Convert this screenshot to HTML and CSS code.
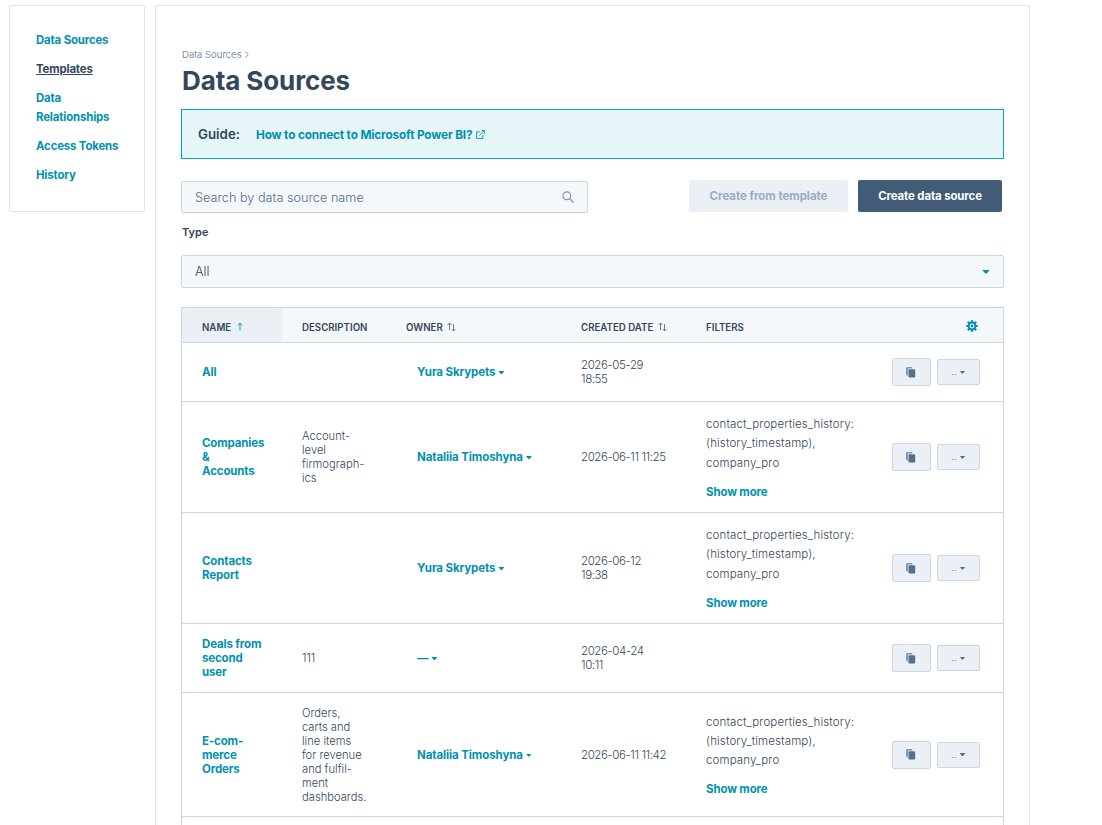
FILE: index.html
```
<!DOCTYPE html>
<html lang="en">
<head>
<meta charset="utf-8">
<title>Data Sources</title>
<link rel="stylesheet" href="styles.css">
</head>
<body>

<svg class="defs" width="0" height="0">
  <symbol id="copy" viewBox="0 0 10 11">
    <path fill="#7c98b6" d="M1.500 0h4.700v1.500H3.300c-.9 0-1.400.5-1.400 1.400v5.600H1.500C.7 8.500 0 7.900 0 7V1.500C0 .7.700 0 1.500 0z"/>
    <rect fill="#516f90" x="2.500" y="2.200" width="6.700" height="8.300" rx="1.200"/>
  </symbol>
  <symbol id="sort" viewBox="0 0 9 10">
    <path fill="none" stroke="#516f90" stroke-width=".9" d="M2.500 8V1M.5 3l2-2 2 2M6.500 2v7M4.800 7.200l1.800 1.800 1.800-1.800"/>
  </symbol>
</svg>

<div class="page">
  <nav class="sidebar">
    <a href="#">Data Sources</a>
    <a href="#" class="active">Templates</a>
    <a href="#">Data<br>Relationships</a>
    <a href="#">Access Tokens</a>
    <a href="#">History</a>
  </nav>

  <main class="content">
    <div class="breadcrumb">Data Sources
      <svg width="4" height="7" viewBox="0 0 4 7"><path fill="none" stroke="#7c98b6" d="M.5.5l2.600 3-2.600 3"/></svg>
    </div>
    <h1>Data Sources</h1>

    <div class="guide">
      <span class="guide-label">Guide:</span>
      <a href="#">How to connect to Microsoft Power BI?</a>
      <svg width="9" height="9" viewBox="0 0 9 9"><path fill="none" stroke="#0091ae" stroke-width=".9" d="M3.800 1.800H.6v6.600h6.300V5M3.300 5.600L8 .9M5.300.6h3.100v3.100"/></svg>
    </div>

    <div class="toolbar">
      <div class="search">
        <span>Search by data source name</span>
        <svg width="12" height="12" viewBox="0 0 12 12"><circle cx="4.800" cy="4.800" r="3.900" fill="none" stroke="#7c98b6" stroke-width="1.200"/><path stroke="#7c98b6" stroke-width="1.300" d="M7.600 7.600l3.900 3.900"/></svg>
      </div>
      <div class="toolbar-buttons">
        <button class="btn btn-disabled" disabled>Create from template</button>
        <button class="btn btn-primary">Create data source</button>
      </div>
    </div>

    <div class="label">Type</div>
    <div class="select"><span>All</span><i class="caret caret-lg"></i></div>

    <table>
      <colgroup>
        <col class="c-name"><col class="c-desc"><col class="c-owner"><col class="c-date"><col class="c-filters"><col>
      </colgroup>
      <thead>
        <tr>
          <th class="sorted">NAME <svg width="6" height="9" viewBox="0 0 6 9"><path fill="none" stroke="#00a4bd" d="M3 8.500V1M.7 3.300L3 1l2.300 2.300"/></svg></th>
          <th>DESCRIPTION</th>
          <th>OWNER <svg width="9" height="10"><use href="#sort"/></svg></th>
          <th>CREATED DATE <svg width="9" height="10"><use href="#sort"/></svg></th>
          <th>FILTERS</th>
          <th class="settings">
            <svg width="12" height="12" viewBox="0 0 12 12">
              <g stroke="#0091ae" fill="none">
                <circle cx="6" cy="6" r="3.400" stroke-width="2"/>
                <path stroke-width="2.200" d="M6 .3v1.900M6 9.800v1.900M.3 6h1.900M9.800 6h1.900M1.800 1.800l1.500 1.500M8.700 8.700l1.500 1.500M1.800 10.200l1.500-1.500M8.700 3.300l1.500-1.500"/>
              </g>
              <circle cx="6" cy="6" r="1.400" fill="#0091ae"/>
            </svg>
          </th>
        </tr>
      </thead>
      <tbody>
        <tr class="row-sm">
          <td><a href="#">All</a></td>
          <td></td>
          <td class="owner"><a href="#">Yura Skrypets</a><i class="caret"></i></td>
          <td class="date">2026-05-29<br>18:55</td>
          <td></td>
          <td class="actions"><div><button class="copy"><svg width="10" height="11"><use href="#copy"/></svg></button><button class="more">..<i class="caret"></i></button></div></td>
        </tr>
        <tr class="row-lg">
          <td><a href="#">Companies<br>&amp;<br>Accounts</a></td>
          <td class="desc">Account-<br>level<br>firmograph-<br>ics</td>
          <td class="owner"><a href="#">Nataliia Timoshyna</a><i class="caret"></i></td>
          <td class="date">2026-06-11 11:25</td>
          <td class="filters">contact_properties_history:<br>(history_timestamp),<br>company_pro<a href="#">Show more</a></td>
          <td class="actions"><div><button class="copy"><svg width="10" height="11"><use href="#copy"/></svg></button><button class="more">..<i class="caret"></i></button></div></td>
        </tr>
        <tr class="row-lg">
          <td><a href="#">Contacts<br>Report</a></td>
          <td></td>
          <td class="owner"><a href="#">Yura Skrypets</a><i class="caret"></i></td>
          <td class="date">2026-06-12<br>19:38</td>
          <td class="filters">contact_properties_history:<br>(history_timestamp),<br>company_pro<a href="#">Show more</a></td>
          <td class="actions"><div><button class="copy"><svg width="10" height="11"><use href="#copy"/></svg></button><button class="more">..<i class="caret"></i></button></div></td>
        </tr>
        <tr class="row-md">
          <td><a href="#">Deals from<br>second<br>user</a></td>
          <td class="desc">111</td>
          <td class="owner"><a href="#">—</a><i class="caret"></i></td>
          <td class="date">2026-04-24<br>10:11</td>
          <td></td>
          <td class="actions"><div><button class="copy"><svg width="10" height="11"><use href="#copy"/></svg></button><button class="more">..<i class="caret"></i></button></div></td>
        </tr>
        <tr class="row-xl">
          <td><a href="#">E-com-<br>merce<br>Orders</a></td>
          <td class="desc">Orders,<br>carts and<br>line items<br>for revenue<br>and fulfil-<br>ment<br>dashboards.</td>
          <td class="owner"><a href="#">Nataliia Timoshyna</a><i class="caret"></i></td>
          <td class="date">2026-06-11 11:42</td>
          <td class="filters">contact_properties_history:<br>(history_timestamp),<br>company_pro<a href="#">Show more</a></td>
          <td class="actions"><div><button class="copy"><svg width="10" height="11"><use href="#copy"/></svg></button><button class="more">..<i class="caret"></i></button></div></td>
        </tr>
      </tbody>
    </table>
  </main>
</div>

</body>
</html>
```
FILE: styles.css
```
* {
  box-sizing: border-box;
}

body {
  margin: 0;
  background: #fff;
  color: #33475b;
  font-family: Inter, "Open Sans", sans-serif;
  font-size: 12px;
}

a {
  color: #0091ae;
  font-weight: 700;
  letter-spacing: -.15px;
  text-decoration: none;
}

svg {
  flex: none;
}

.defs {
  display: none;
}

.page {
  display: flex;
  align-items: flex-start;
  gap: 10px;
  height: 100vh;
  padding: 5px 0 0 9px;
}

.sidebar {
  display: flex;
  flex-direction: column;
  gap: 10px;
  width: 136px;
  height: 207px;
  padding: 25px 26px;
  border: 1px solid #dfe3eb;
  border-radius: 2px;
  line-height: 19px;
  font-size: 11.4px;
  white-space: nowrap;
}

.sidebar .active {
  color: #33475b;
  text-decoration: underline;
}

.content {
  width: 875px;
  height: 100%;
  padding: 42px 25px 0;
  border: 1px solid #dfe3eb;
  border-bottom: 0;
  border-radius: 2px 2px 0 0;
}

.breadcrumb {
  height: 14px;
  line-height: 14px;
  padding-left: 1px;
  font-size: 9.6px;
  font-weight: 300;
  color: #516f90;
}

.breadcrumb svg {
  margin-left: 1px;
}

h1 {
  margin: 3px 0 0 1px;
  height: 32px;
  line-height: 32px;
  font-size: 26px;
  font-weight: 700;
  letter-spacing: -.1px;
}

.guide {
  display: flex;
  align-items: center;
  height: 50px;
  margin-top: 12px;
  padding: 0 16px;
  background: #e5f5f8;
  border: 1px solid #00a4bd;
}

.guide a {
  padding-top: 1px;
  font-size: 11.8px;
}

.guide-label {
  margin-right: 16px;
  font-size: 13.3px;
  font-weight: 600;
}

.guide svg {
  margin-left: 4px;
}

.toolbar {
  display: flex;
  justify-content: space-between;
  margin-top: 21px;
  padding-right: 2px;
}

.search,
.select {
  display: flex;
  align-items: center;
  justify-content: space-between;
  padding: 0 13px;
  background: #f5f8fa;
  border: 1px solid #cbd6e2;
  border-radius: 2px;
  font-weight: 300;
}

.search {
  width: 407px;
  height: 32px;
  margin-top: 1px;
  font-size: 12.7px;
  color: #516f90;
}

.toolbar-buttons {
  display: flex;
  gap: 10px;
}

.btn {
  height: 32px;
  padding: 0;
  border: 0;
  border-radius: 2px;
  font: 700 11.4px Inter, "Open Sans", sans-serif;
}

.btn-disabled {
  width: 159px;
  background: #eaf0f6;
  color: #99acc2;
}

.btn-primary {
  width: 144px;
  background: #425b76;
  color: #fff;
  letter-spacing: -.1px;
}

.label {
  height: 20px;
  margin: 9px 0 13px 1px;
  line-height: 20px;
  font-size: 11px;
  font-weight: 600;
}

.select {
  height: 33px;
  font-size: 12.7px;
}

.caret {
  display: inline-block;
  width: 6px;
  height: 3px;
  margin-left: 3px;
  background: currentColor;
  clip-path: polygon(0 0, 100% 0, 60% 100%, 40% 100%);
  vertical-align: 2px;
}

.caret-lg {
  width: 8px;
  height: 4px;
  color: #0091ae;
}

table {
  width: 823px;
  margin-top: 19px;
  table-layout: fixed;
  border: 1px solid #cbd6e2;
  border-bottom: 0;
  border-collapse: separate;
  border-spacing: 0;
}

table::after {
  content: "";
  display: block;
  height: 8px;
}

.c-name {
  width: 100px;
}

.c-desc {
  width: 104px;
}

.c-owner {
  width: 175px;
}

.c-date {
  width: 125px;
}

.c-filters {
  width: 186px;
}

th,
td {
  padding: 0 0 0 20px;
  border-bottom: 1px solid #cbd6e2;
  text-align: left;
  white-space: nowrap;
}

th {
  height: 35px;
  padding-top: 4px;
  background: #f5f8fa;
  font-size: 9.7px;
  font-weight: 600;
}

th svg {
  margin-left: 2px;
  vertical-align: -1px;
}

.sorted {
  background: #eaf0f6;
}

.sorted svg {
  margin-left: 3px;
  vertical-align: 0;
}

.settings {
  padding: 2px 25px 0 0;
  text-align: right;
}

.settings svg {
  vertical-align: middle;
}

td {
  line-height: 14px;
  font-size: 11.5px;
  font-weight: 300;
}

.row-sm {
  height: 59px;
}

.row-md {
  height: 69px;
}

.row-lg {
  height: 111px;
}

.row-xl {
  height: 124px;
}

.desc {
  font-size: 11.2px;
}

.owner {
  padding-left: 31px;
  color: #0091ae;
}

.owner a {
  letter-spacing: -.1px;
}

.date {
  letter-spacing: -.4px;
}

.filters {
  padding-top: 3px;
  line-height: 19.2px;
  letter-spacing: .13px;
}

.filters a {
  display: block;
  margin-top: 10px;
}

.actions div {
  display: flex;
  align-items: center;
  gap: 6px;
}

.actions button {
  display: flex;
  align-items: center;
  justify-content: center;
  padding: 0;
  background: #eaf0f6;
  border: 1px solid #cbd6e2;
  border-radius: 2px;
  color: #516f90;
  font-size: 9px;
}

.actions .copy {
  width: 39px;
  height: 28px;
  padding-right: 1px;
}

.actions .more {
  width: 43px;
  height: 26px;
}
```
